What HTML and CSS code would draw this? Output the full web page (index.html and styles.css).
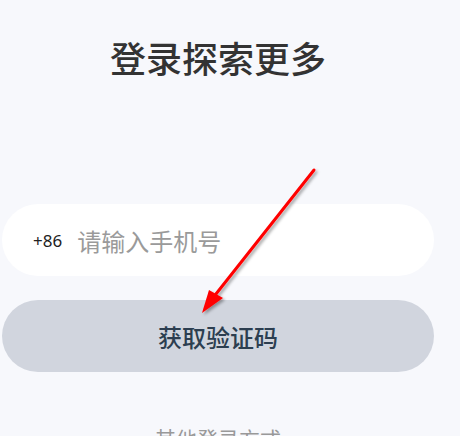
FILE: index.html
```html
<!DOCTYPE html>
<html lang="zh-CN">
<head>
    <meta charset="UTF-8">
    <meta name="viewport" content="width=device-width, initial-scale=1.0">
    <title>登录</title>
    <link rel="stylesheet" href="styles.css">
</head>
<body>
    <div class="page">
        <h1 class="title">登录探索更多</h1>

        <div class="form">
            <div class="phone-field">
                <span class="area-code">+86</span>
                <input type="tel" class="phone-input" placeholder="请输入手机号">
            </div>
            <button class="code-btn">获取验证码</button>
        </div>

        <p class="other-login">其他登录方式</p>
    </div>

    <!-- annotation arrow over the page -->
    <svg class="arrow" width="460" height="436" viewBox="0 0 460 436">
        <defs>
            <filter id="shadow" x="-20%" y="-20%" width="140%" height="140%">
                <feDropShadow dx="2" dy="2" stdDeviation="1.5" flood-color="#000" flood-opacity="0.35"/>
            </filter>
        </defs>
        <g filter="url(#shadow)">
            <line x1="314" y1="170" x2="212" y2="299" stroke="#ff0000" stroke-width="3" stroke-linecap="round"/>
            <polygon points="202,313 209,290 223,298" fill="#ff0000"/>
        </g>
    </svg>
</body>
</html>
```

FILE: styles.css
```css
body {
    margin: 0;
    background-color: #f7f8fc;
    font-family: "Noto Sans CJK SC", "Noto Sans", sans-serif;
    overflow: hidden;
}
.page {
    width: 432px;
    padding: 0 2px;
}
.title {
    margin: 32px 0 0;
    font-size: 36px;
    line-height: 50px;
    font-weight: 500;
    color: #333333;
    text-align: center;
}
.form {
    margin-top: 122px;
    display: flex;
    flex-direction: column;
    gap: 24px;
}
.phone-field {
    display: flex;
    align-items: center;
    gap: 15px;
    height: 72px;
    padding-left: 31px;
    background-color: #ffffff;
    border-radius: 36px;
}
.area-code {
    font-family: "Noto Sans", sans-serif;
    font-size: 17px;
    color: #222222;
}
.phone-input {
    flex: 1;
    border: none;
    outline: none;
    background: transparent;
    font-family: "Noto Sans CJK SC", sans-serif;
    font-size: 24px;
    color: #333333;
    padding: 0;
}
.phone-input::placeholder {
    color: #9a9a9a;
}
.code-btn {
    height: 72px;
    border: none;
    border-radius: 36px;
    background-color: #d1d5de;
    color: #2c3e50;
    font-family: "Noto Sans CJK SC", sans-serif;
    font-size: 24px;
    font-weight: 500;
    cursor: pointer;
}
.other-login {
    margin: 51px 0 0;
    font-size: 21px;
    line-height: 30px;
    color: #999999;
    text-align: center;
}
.arrow {
    position: absolute;
    top: 0;
    left: 0;
    pointer-events: none;
}
```
